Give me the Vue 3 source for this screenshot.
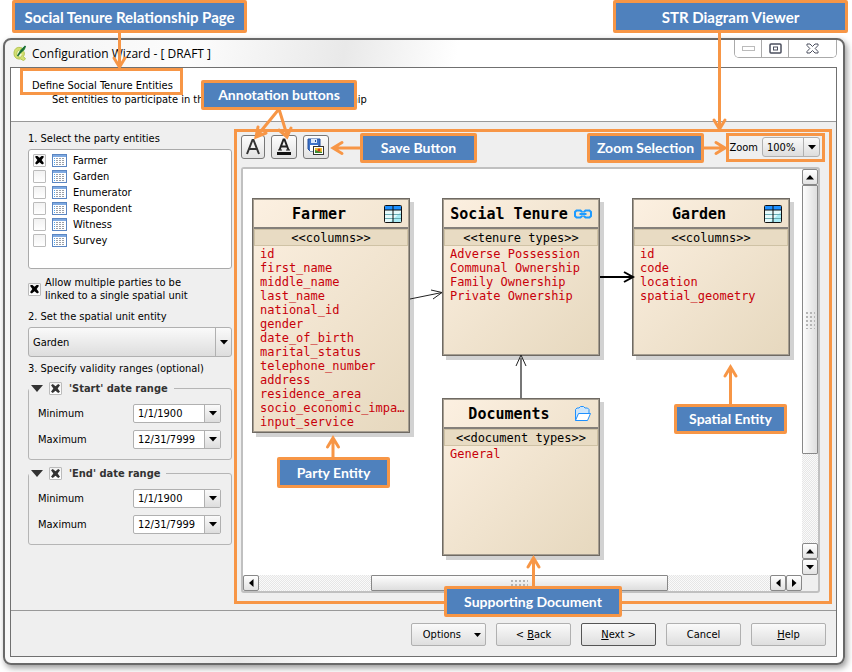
<script setup>
import { ref } from 'vue'

const parties = ref([
  { name: 'Farmer', on: true },
  { name: 'Garden', on: false },
  { name: 'Enumerator', on: false },
  { name: 'Respondent', on: false },
  { name: 'Witness', on: false },
  { name: 'Survey', on: false },
])
const multiple = ref(true)
const ranges = ref([
  { id: 'start', title: "'Start' date range", on: true, min: '1/1/1900', max: '12/31/7999' },
  { id: 'end', title: "'End' date range", on: true, min: '1/1/1900', max: '12/31/7999' },
])

const nodes = [
  {
    title: 'Farmer', kind: 'columns', icon: 'table', x: 9, y: 29, h: 235,
    items: ['id', 'first_name', 'middle_name', 'last_name', 'national_id', 'gender', 'date_of_birth',
      'marital_status', 'telephone_number', 'address', 'residence_area', 'socio_economic_impa…', 'input_service'],
  },
  {
    title: 'Social Tenure', kind: 'tenure types', icon: 'link', x: 199, y: 29, h: 158,
    items: ['Adverse Possession', 'Communal Ownership', 'Family Ownership', 'Private Ownership'],
  },
  {
    title: 'Garden', kind: 'columns', icon: 'table', x: 389, y: 29, h: 158,
    items: ['id', 'code', 'location', 'spatial_geometry'],
  },
  { title: 'Documents', kind: 'document types', icon: 'folder', x: 199, y: 229, h: 158, items: ['General'] },
]

const callouts = [
  { text: 'Social Tenure Relationship Page', x: 12, y: 0, w: 235, h: 33, large: true },
  { text: 'STR Diagram Viewer', x: 613, y: 0, w: 235, h: 33, large: true },
  { text: 'Annotation buttons', x: 201, y: 80, w: 156, h: 30 },
  { text: 'Save Button', x: 360, y: 133, w: 117, h: 30 },
  { text: 'Zoom Selection', x: 587, y: 133, w: 117, h: 30 },
  { text: 'Spatial Entity', x: 674, y: 404, w: 113, h: 30 },
  { text: 'Party Entity', x: 277, y: 457, w: 113, h: 31 },
  { text: 'Supporting Document', x: 444, y: 586, w: 178, h: 31 },
]
const place = (b) => ({ left: b.x + 'px', top: b.y + 'px', width: b.w + 'px', height: b.h + 'px' })
const placeNode = (n) => ({ left: n.x + 'px', top: n.y + 'px', height: n.h + 'px' })
</script>

<template>
  <div class="page">
    <main class="window">
      <header class="titlebar">
        <svg class="logo" viewBox="0 0 14 16" width="14" height="16">
          <path d="M9 3C4 1 1 4 1 8.500c0 4 3 6 6.500 5.500l3 1.500 2-1.500-2-2.500c1-2 1-3 .5-5" fill="#d3e070" stroke="#b4c455" />
          <path d="M6 5c-2.500 1-3 5-1 6.500s4 .5 4-1.500" fill="#f4f7cf" stroke="#b4c455" />
          <path d="M5 10C6 6 8 3 12.500 1c.5 3-1.500 5-3.500 6z" fill="#3d9142" />
          <path d="M4.500 11 12.500 1" stroke="#176b36" stroke-width="1.500" />
        </svg>
        <h1>Configuration Wizard - [ DRAFT ]</h1>
        <div class="winbtns">
          <button aria-label="Minimize"><svg width="13" height="6"><rect x=".5" y=".5" width="12" height="4" fill="#fff" stroke="#bbb" /></svg></button>
          <button aria-label="Maximize"><svg width="13" height="11"><rect x="1" y="1" width="11" height="9" rx="1" fill="#fff" stroke="#4b4f5e" stroke-width="1.500" /><rect x="4.500" y="4" width="4" height="3" fill="#fff" stroke="#4b4f5e" /></svg></button>
          <button class="close" aria-label="Close"><svg width="13" height="11"><path d="M1 1h3l2.500 2.500L9 1h3v1.500L9.200 5.500 12 8.500V10H9L6.500 7.500 4 10H1V8.500l2.800-3L1 2.500z" fill="#fff" stroke="#4b4f5e" /></svg></button>
        </div>
      </header>

      <section class="panel">
        <div class="intro">
          <h2>Define Social Tenure Entities</h2>
          <p><span>Set entities to participate in th</span><span>hip</span></p>
        </div>

        <div class="body">
          <div class="side">
            <p class="step">1. Select the party entities</p>
            <ul class="list">
              <li v-for="p in parties" :key="p.name">
                <label>
                  <input v-model="p.on" type="checkbox" class="tick">
                  <svg width="15" height="13" viewBox="0 0 15 13">
                    <rect x=".5" y=".5" width="14" height="12" fill="#fff" stroke="#5b86c2" />
                    <rect x="1" y="1" width="13" height="2" fill="#7ea9e1" />
                    <path d="M2.500 4v8" stroke="#4da3ea" stroke-dasharray="1 1" />
                    <path d="M4 4.500h9M4 6.500h9M4 8.500h9M4 10.500h9" stroke="#9aa0a8" stroke-dasharray="2 1" />
                  </svg>
                  <span>{{ p.name }}</span>
                </label>
              </li>
            </ul>
            <label class="multi">
              <input v-model="multiple" type="checkbox" class="tick">
              <span>Allow multiple parties to be<br>linked to a single spatial unit</span>
            </label>
            <label class="step" for="unit">2. Set the spatial unit entity</label>
            <div class="combo big">
              <select id="unit"><option>Garden</option><option>Farmer</option></select>
              <span class="drop"><svg width="8" height="5"><path d="M0 0h8L4 4.500z" /></svg></span>
            </div>
            <p class="step third">3. Specify validity ranges (optional)</p>
            <fieldset v-for="r in ranges" :key="r.id">
              <legend>
                <svg width="12" height="7"><path d="M0 0h12L6 7z" fill="#333" /></svg>
                <label><input v-model="r.on" type="checkbox" class="tick soft"><span>{{ r.title }}</span></label>
              </legend>
              <div class="field">
                <label :for="r.id + '-min'">Minimum</label>
                <div class="date">
                  <input :id="r.id + '-min'" v-model="r.min" type="text">
                  <button aria-label="Pick minimum"><svg width="8" height="5"><path d="M0 0h8L4 4.500z" /></svg></button>
                </div>
              </div>
              <div class="field">
                <label :for="r.id + '-max'">Maximum</label>
                <div class="date">
                  <input :id="r.id + '-max'" v-model="r.max" type="text">
                  <button aria-label="Pick maximum"><svg width="8" height="5"><path d="M0 0h8L4 4.500z" /></svg></button>
                </div>
              </div>
            </fieldset>
          </div>

          <div class="viewer">
            <div class="toolbar">
              <button class="tool" aria-label="Add text">
                <svg width="16" height="18" viewBox="0 0 16 18"><path d="M2 16 7.500 2h1L14 16M4 11h8" fill="none" stroke="#333" stroke-width="2" /></svg>
              </button>
              <button class="tool wide" aria-label="Text style">
                <svg width="16" height="18" viewBox="0 0 16 18"><path d="M3.500 12 7.500 1.500h1l4 10.500M5 8.500h6" fill="none" stroke="#222" stroke-width="2" /><path d="M2 12h4M10 12h4" stroke="#222" /><path d="M1 15.500h14" stroke="#111" stroke-width="3" /></svg>
              </button>
              <button class="tool wide" aria-label="Save image">
                <svg width="18" height="18" viewBox="0 0 18 18">
                  <path d="M1 1h12v12H3l-2-2z" fill="#3f73c8" stroke="#234f9c" />
                  <rect x="4" y="1" width="6" height="4" fill="#dce9fb" /><rect x="8" y="2" width="1" height="2" fill="#234f9c" />
                  <rect x="3" y="7" width="8" height="6" fill="#fff" />
                  <rect x="6.500" y="8.500" width="10" height="8" fill="#fff" stroke="#333" />
                  <rect x="8" y="10" width="7" height="5" fill="#f1c232" />
                  <path d="M8 15v-3l3 1 4 1v1z" fill="#3c8c32" /><circle cx="12" cy="12" r="1.500" fill="#d3361b" />
                </svg>
              </button>
              <label class="zoomlabel" for="zoom">Zoom</label>
              <div class="combo small">
                <select id="zoom"><option>100%</option><option>150%</option></select>
                <span class="drop"><svg width="8" height="5"><path d="M0 0h8L4 4.500z" /></svg></span>
              </div>
            </div>

            <div class="scroller">
              <div class="canvas">
                <article v-for="n in nodes" :key="n.title" class="node" :style="placeNode(n)">
                  <header>
                    <h3>{{ n.title }}</h3>
                    <svg v-if="n.icon === 'table'" width="18" height="18" viewBox="0 0 18 18">
                      <rect x="1" y="1" width="16" height="16" fill="#e6fafc" />
                      <path d="M17 7v10H6z" fill="#a8ecf6" />
                      <rect x="1" y="1" width="16" height="4" fill="#1e90ff" />
                      <path d="M1 9.500h16M1 13.500h16" stroke="#6aabb3" />
                      <path d="M9 1v16M1 5h16" stroke="#111" />
                      <rect x=".5" y=".5" width="17" height="17" rx="1" fill="none" stroke="#111" />
                    </svg>
                    <svg v-else-if="n.icon === 'link'" width="18" height="18" viewBox="0 0 18 18" fill="none" stroke="#1e9bff" stroke-width="2">
                      <path d="M8 7.500V7L6.500 5.500h-4L1 7v4l1.500 1.500h4L8 11v-.5M10 7.500V7l1.500-1.500h4L17 7v4l-1.500 1.500h-4L10 11v-.5M5.500 9h7" />
                    </svg>
                    <svg v-else width="18" height="18" viewBox="0 0 18 18" stroke="#1e90ff" stroke-linejoin="round">
                      <path d="M1.500 15.500v-11L3 3h2l1.500-1.500h3L11 3h2.500L15 4.500V8" fill="#cfe6fa" />
                      <path d="M4.500 8.500h12l-3 7h-12z" fill="#fff" />
                    </svg>
                  </header>
                  <div class="kind">&lt;&lt;{{ n.kind }}&gt;&gt;</div>
                  <ul><li v-for="i in n.items" :key="i">{{ i }}</li></ul>
                </article>
                <svg class="links" width="559" height="405" fill="none">
                  <path d="M167 130 199 123.500M188 121l11 2.500-9 6.500" stroke="#222" />
                  <path d="M357 108h33M381 103l9 5-9 5" stroke="#000" stroke-width="2" />
                  <path d="M278 229v-40" stroke="#777" stroke-width="2" />
                  <path d="M273 197l5-11 5 11" stroke="#222" />
                </svg>
              </div>
              <div class="vbar">
                <button aria-label="Up"><svg width="8" height="5"><path d="M0 4.500h8L4 0z" /></svg></button>
                <div class="thumb"><i class="grip" /></div>
                <div class="track" />
                <button aria-label="Page up"><svg width="8" height="5"><path d="M0 4.500h8L4 0z" /></svg></button>
                <button aria-label="Down"><svg width="8" height="5"><path d="M0 0h8L4 4.500z" /></svg></button>
              </div>
              <div class="hbar">
                <button aria-label="Left"><svg width="5" height="8"><path d="M4.500 0v8L0 4z" /></svg></button>
                <div class="track before" />
                <div class="thumb"><i class="grip" /></div>
                <div class="track" />
                <button aria-label="Page left"><svg width="5" height="8"><path d="M4.500 0v8L0 4z" /></svg></button>
                <button aria-label="Right"><svg width="5" height="8"><path d="M0 0v8l4.500-4z" /></svg></button>
              </div>
            </div>
          </div>
        </div>

        <footer class="actions">
          <button class="opt">Options <svg width="7" height="4"><path d="M0 0h7L3.500 4z" /></svg></button>
          <button>&lt; <u>B</u>ack</button>
          <button class="primary"><u>N</u>ext &gt;</button>
          <button>Cancel</button>
          <button><u>H</u>elp</button>
        </footer>
      </section>
    </main>

    <svg class="marks" width="852" height="672" fill="none" stroke="#f79646" stroke-width="3">
      <rect x="21.500" y="69.500" width="160" height="24" />
      <rect x="235.500" y="130.500" width="595" height="472" />
      <rect x="727.500" y="134.500" width="96" height="26" />
      <g stroke-linecap="round">
        <path d="M119.500 33v33M114 58l5.500 9 5.500-9" />
        <path d="M719.500 33v95M714 120l5.500 9 5.500-9" />
        <path d="M279 109l-22 27M258 127l-2 10 10-4M279 109l8 26M279 130l8 7 4-9" />
        <path d="M360 148h-26M342 142.500l-9 5.500 9 5.500" />
        <path d="M704 148h19M716 142.500l9 5.500-9 5.500" />
        <path d="M730.500 404v-36M725 376l5.500-9 5.500 9" />
        <path d="M333 457v-18M327.500 447l5.500-9 5.500 9" />
        <path d="M533.500 586v-27M528 567l5.500-9 5.500 9" />
      </g>
    </svg>
    <div v-for="c in callouts" :key="c.text" class="callout" :class="{ large: c.large }" :style="place(c)">{{ c.text }}</div>
  </div>
</template>

<style>
body { background: #fff; }
</style>

<style scoped>
* { box-sizing: border-box; margin: 0; }
.page {
  position: relative;
  display: flex;
  min-height: 100vh;
  padding: 38px 7px 7px 3px;
  font: 11px/13px "DejaVu Sans Condensed", "Noto Sans", sans-serif;
  color: #000;
}
button, input, select { font: inherit; color: inherit; }
button { display: flex; align-items: center; justify-content: center; padding: 0; }
ul { list-style: none; padding: 0; }
.window {
  flex: 1;
  display: flex;
  flex-direction: column;
  min-width: 0;
  padding: 0 6px 6px 5px;
  border: 2px solid #696969;
  border-radius: 8px;
  background: linear-gradient(100deg, #f3f3f3 0, #fcfcfc 20%, #e9e9e9 36%, #fff 48%);
  box-shadow: 2px 3px 6px #999;
}
.titlebar { display: flex; height: 27px; padding-left: 3px; }
.logo { margin-top: 5px; }
h1 { flex: 1; padding-left: 5px; font: 12px/27px "Open Sans", sans-serif; }
.winbtns {
  display: flex;
  height: 18px;
  border: 1px solid #aaa;
  border-top: 0;
  border-radius: 0 0 5px 5px;
  overflow: hidden;
}
.winbtns button { width: 27px; border: 0; border-right: 1px solid #aaa; background: #fff; }
.winbtns .close { width: 47px; border-right: 0; }
.panel {
  flex: 1;
  display: flex;
  flex-direction: column;
  border: 1px solid #707070;
  background: #efefef;
}
.intro { height: 54px; padding: 11px 21px 0; background: #fff; border-bottom: 1px solid #999; }
h2 { font: inherit; line-height: 14px; }
.intro p { display: flex; gap: 148px; padding-left: 20px; line-height: 14px; white-space: nowrap; }
.body { flex: 1; display: flex; gap: 9px; padding: 13px 16px 17px 17px; border-bottom: 1px solid #999; }
.side { width: 204px; display: flex; flex-direction: column; }
.step { line-height: 14px; margin-top: -3px; padding-bottom: 3px; }
.list {
  height: 120px;
  padding: 2px 4px;
  border: 1px solid #aaa;
  border-radius: 3px;
  background: #fff;
}
.list label { display: flex; align-items: center; gap: 6px; height: 16px; }
.tick {
  appearance: none;
  flex: none;
  display: grid;
  place-items: center;
  width: 13px;
  height: 13px;
  border: 1px solid #bbb;
  border-radius: 1px;
  background: linear-gradient(#f2f2f2, #fff);
}
.tick:checked::before {
  content: "";
  width: 9px;
  height: 9px;
  background: #000;
  clip-path: polygon(0 15%, 20% 0, 50% 26%, 80% 0, 100% 15%, 74% 50%, 100% 85%, 80% 100%, 50% 74%, 20% 100%, 0 85%, 26% 50%);
}
.tick.soft:checked::before { background: #333; }
.multi { display: flex; align-items: center; gap: 4px; margin: 7px 0 11px; }
.combo { position: relative; }
.combo select {
  appearance: none;
  display: block;
  width: 100%;
  padding: 0 4px;
  border: 1px solid #b0b0b0;
  border-radius: 3px;
  background: linear-gradient(#fafafa, #ddd);
}
.big select { height: 30px; }
.small { width: 58px; }
.small select { height: 20px; }
.drop {
  position: absolute;
  inset: 1px 1px 1px auto;
  width: 16px;
  display: grid;
  place-items: center;
  border-left: 1px solid #b0b0b0;
  pointer-events: none;
}
.third { margin-top: 5px; padding-bottom: 6px; }
fieldset {
  height: 78px;
  margin-bottom: 7px;
  padding: 8px 10px 0 9px;
  border: 1px solid #b5b5b5;
  border-radius: 3px;
  min-width: 0;
}
legend { display: flex; align-items: center; gap: 6px; margin-left: -9px; padding: 0 6px 0 2px; font-weight: bold; color: #333; }
legend label { display: flex; align-items: center; gap: 7px; }
.field { display: flex; align-items: center; justify-content: space-between; height: 20px; margin-bottom: 6px; }
.date { display: flex; width: 88px; height: 19px; border: 1px solid #b0b0b0; border-radius: 2px; background: #fff; }
.date input { flex: 1; min-width: 0; padding: 0 0 0 4px; border: 0; background: none; }
.date button { width: 16px; border: 0; border-left: 1px solid #b0b0b0; background: linear-gradient(#fafafa, #ddd); }
.viewer { flex: 1; display: flex; flex-direction: column; gap: 8px; min-width: 0; }
.toolbar { display: flex; align-items: center; gap: 6px; height: 24px; }
.tool { width: 24px; height: 24px; border: 1px solid #777; border-radius: 3px; background: linear-gradient(#fdfdfd, #e2e2e2); }
.tool.wide { width: 26px; }
.zoomlabel { margin-left: auto; }
.toolbar .small { margin-left: -2px; }
.scroller {
  flex: 1;
  display: grid;
  grid-template: 1fr 16px / 1fr 16px;
  border: 2px solid #c0c0c0;
  border-radius: 3px;
}
.canvas { position: relative; overflow: hidden; background: #fff; }
.links { position: absolute; left: 0; top: 0; }
.node {
  position: absolute;
  width: 158px;
  border: 1px solid #6f6a63;
  background: linear-gradient(135deg, #fcf0e1, #e6d8be);
  box-shadow: inset 0 0 0 1px #a59d90, 4px 4px 0 #d2d2d2;
  padding: 1px;
  font: 12px/14px "DejaVu Sans Mono", monospace;
}
.node header { display: flex; align-items: center; height: 29px; padding-right: 6px; border-bottom: 2px solid #85807a; }
h3 { flex: 1; text-align: center; font-size: 15px; white-space: nowrap; }
.kind { height: 17px; border: 1px solid #cfc2a5; background: #e8dbc3; text-align: center; line-height: 16px; }
.node ul { padding: 1px 0 0 6px; color: #c8000a; white-space: nowrap; }
.vbar { display: flex; flex-direction: column; }
.hbar { display: flex; }
.vbar button, .hbar button { flex: none; width: 16px; height: 16px; border: 1px solid #888; border-radius: 2px; background: linear-gradient(#fff, #e2e2e2); }
.track { flex: 89; background: repeating-conic-gradient(#e6e6e6 0 25%, #fafafa 0 50%) 0 0 / 2px 2px; }
.thumb { display: grid; place-items: center; border: 1px solid #888; border-radius: 1px; }
.vbar .thumb { flex: 268; background: linear-gradient(90deg, #fdfdfd, #dedede); }
.hbar .thumb { flex: 297; background: linear-gradient(#fdfdfd, #dedede); }
.hbar .track { flex: 102; }
.hbar .before { flex: 112; }
.grip { width: 10px; height: 18px; background: radial-gradient(circle, #b5b5b5 1px, transparent 1px) 0 0 / 4px 4px; }
.hbar .grip { width: 18px; height: 8px; }
.actions { display: flex; justify-content: flex-end; gap: 10px; padding: 12px 10px 10px; }
.actions button {
  width: 75px;
  height: 23px;
  border: 1px solid #b0b0b0;
  border-radius: 2px;
  background: linear-gradient(#fafafa, #dedede);
  white-space: pre;
}
.actions .primary { border-color: #555; }
.actions .opt { gap: 10px; padding-left: 7px; }
.marks { position: absolute; left: 0; top: 0; pointer-events: none; }
.callout {
  position: absolute;
  display: flex;
  align-items: center;
  justify-content: center;
  border: 3px solid #f79646;
  border-radius: 2px;
  background: #4f81bd;
  color: #fff;
  font: bold 14px/18px Lato, sans-serif;
  white-space: nowrap;
}
.callout.large { font-size: 15px; }
</style>
